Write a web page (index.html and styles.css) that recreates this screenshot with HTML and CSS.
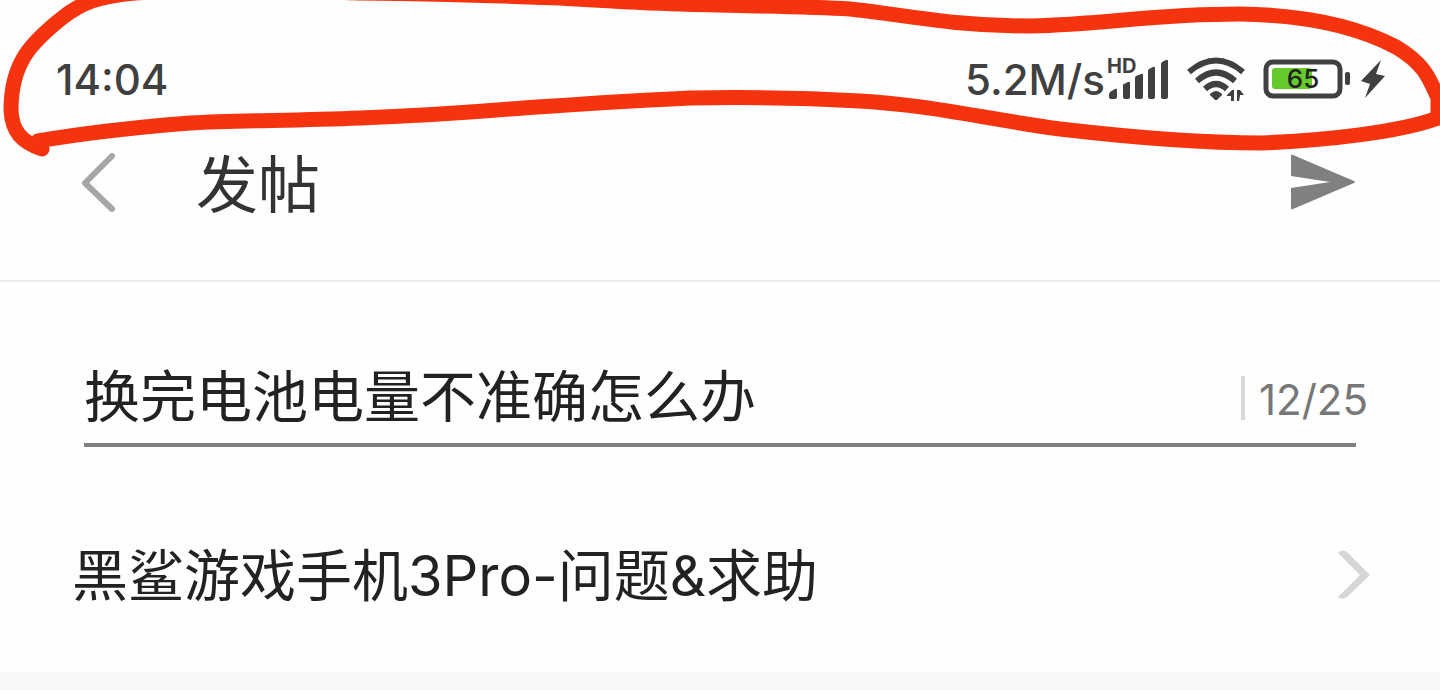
FILE: index.html
```
<!DOCTYPE html>
<html lang="zh-CN">
<head>
<meta charset="UTF-8">
<meta name="viewport" content="width=device-width, initial-scale=1.0">
<title>发帖</title>
<link rel="stylesheet" href="styles.css">
</head>
<body>

<div class="status-bar">
  <span class="time">14:04</span>
  <div class="status-icons">
    <span class="speed">5.2M/s</span>
    <div class="signal">
      <span class="hd">HD</span>
      <svg width="62" height="42" viewBox="0 0 62 42" fill="#404040">
        <path d="M3 34l5-3q2-1 2 1v7q0 2-2 2H4q-2 0-2-2v-3z"/>
        <path d="M16 27q0-1 1-1l4-2q2-1 2 1v14q0 2-2 2h-3q-2 0-2-2z"/>
        <path d="M28 20q0-1 1-2l5-2q2-1 2 1v22q0 2-2 2h-4q-2 0-2-2z"/>
        <path d="M41 13q0-1 1-2l4-2q2-1 2 1v29q0 2-2 2h-3q-2 0-2-2z"/>
        <path d="M54 6q0-1 1-2l4-2q2-1 2 1v36q0 2-2 2h-3q-2 0-2-2z"/>
      </svg>
    </div>
    <svg class="wifi" width="58" height="44" viewBox="0 0 58 44" fill="none" stroke="#404040" stroke-width="6">
      <path d="M2 15Q29-8 56 15"/>
      <path d="M10 24Q29 7 48 24"/>
      <path d="M18 32Q29 22 40 32"/>
      <path d="M23 37q6-6 12 0v1l-5 5h-2l-5-5z" fill="#404040" stroke="none"/>
      <path d="M40 38l5-5h2v11h-3v-5h-4zM50 33h3l4 5h-4v1l-1 5h-2z" fill="#404040" stroke="none"/>
    </svg>
    <div class="battery">
      <svg width="88" height="40" viewBox="0 0 88 40">
        <rect x="3" y="3" width="74" height="34" rx="7" fill="none" stroke="#404040" stroke-width="5"/>
        <rect x="9" y="9" width="40" height="21" rx="3" fill="#65cb2c"/>
        <rect x="82" y="13" width="5" height="13" rx="2" fill="#404040"/>
      </svg>
      <span class="battery-level">65</span>
    </div>
    <svg class="bolt" width="24" height="38" viewBox="0 0 24 38" fill="#404040">
      <path d="M20 0L0 21l9 3L4 38l20-22-9-2z"/>
    </svg>
  </div>
</div>

<header class="header">
  <button type="button" class="icon-btn" aria-label="返回">
    <svg width="36" height="60" viewBox="0 0 36 60" fill="none" stroke="#a6a6a6" stroke-width="6" stroke-linecap="round" stroke-linejoin="round">
      <path d="M32 3L5 30l27 26"/>
    </svg>
  </button>
  <h1>发帖</h1>
  <button type="button" class="icon-btn" aria-label="发送">
    <svg width="66" height="58" viewBox="0 0 66 58" fill="#808080">
      <path d="M1 2q0-2 2-1l61 26q2 1 0 2L3 55q-2 1-2-1V34l39-6L1 22z"/>
    </svg>
  </button>
</header>

<main>
  <form class="post-title">
    <input type="text" id="title" aria-label="标题" maxlength="25" value="换完电池电量不准确怎么办">
    <output class="counter" for="title">12/25</output>
  </form>

  <a href="#" class="forum">
    <span>黑鲨游戏手机3Pro-问题&amp;求助</span>
    <svg width="32" height="50" viewBox="0 0 32 50" fill="#d6d6d6">
      <path d="M0 3Q5-2 10 3l22 22-22 21q-5 5-10 1l22-22z"/>
    </svg>
  </a>
</main>

<svg class="marker" viewBox="0 0 1440 160" fill="none" stroke="#f5330f" stroke-width="15" stroke-linecap="round" stroke-linejoin="round" aria-hidden="true">
  <path d="M42 149C22 142 12 132 11 110C11 62 32 42 62 18C82 2 100-4 135-7C220-12 300-9 360-7C440-6 510-4 560-2C610 1 640 3 680 4C740 6 800 6 850 9C900 14 950 26 1030 26C1110 24 1150 14 1240 14C1310 15 1360 28 1396 47C1425 64 1430 80 1438 98V118C1400 132 1330 140 1262 143C1190 143 1120 136 1060 129C980 118 930 105 860 101C790 97 740 97 690 98C620 101 570 105 510 109C450 114 410 116 360 118C290 121 240 120 190 123C140 127 90 132 38 141"/>
</svg>

</body>
</html>
```

FILE: styles.css
```
* {
  box-sizing: border-box;
}

body {
  font-family: Inter, "Noto Sans CJK SC", sans-serif;
  background-color: #fefefe;
  color: #222;
  margin: 0;
  min-height: 100vh;
  display: flex;
  flex-direction: column;
}

.status-bar {
  display: flex;
  justify-content: space-between;
  align-items: center;
  height: 110px;
  padding: 48px 55px 0 56px;
  color: #404040;
  font-size: 42px;
  font-weight: 500;
}

.status-icons {
  display: flex;
  align-items: center;
  gap: 18px;
}

.signal {
  position: relative;
  display: flex;
  margin-left: -16px;
}

.hd {
  position: absolute;
  top: -2px;
  left: 0;
  font-size: 20px;
  line-height: 20px;
  font-weight: 700;
}

.battery {
  position: relative;
  display: flex;
}

.battery-level {
  position: absolute;
  top: 0;
  left: 0;
  width: 80px;
  font-size: 26px;
  line-height: 40px;
  text-align: center;
  color: #222;
}

.bolt {
  margin-left: -8px;
}

.header {
  display: flex;
  align-items: center;
  height: 172px;
  padding: 0 84px 24px 80px;
  border-bottom: 2px solid #ebebeb;
}

.header h1 {
  flex: 1;
  margin: 0 0 0 80px;
  padding-top: 6px;
  color: #333;
  font-size: 62px;
  line-height: 72px;
  font-weight: 400;
}

.icon-btn {
  display: flex;
  padding: 0;
  border: none;
  background: none;
  cursor: pointer;
}

main {
  flex: 1;
  padding-top: 72px;
  border-bottom: 18px solid #f8f8f8;
}

.post-title {
  position: relative;
  margin: 0 84px;
}

.post-title input {
  display: block;
  width: 100%;
  height: 93px;
  padding: 0 140px 12px 0;
  border: none;
  border-bottom: 4px solid #808080;
  outline: none;
  background: none;
  color: #222;
  font-family: inherit;
  font-size: 56px;
}

.counter {
  position: absolute;
  top: 22px;
  right: -12px;
  height: 44px;
  padding-left: 14px;
  border-left: 4px solid #d9d9d9;
  color: #777;
  font-size: 42px;
  line-height: 48px;
}

.forum {
  display: flex;
  justify-content: space-between;
  align-items: center;
  margin-top: 87px;
  padding: 0 70px 0 72px;
  color: #222;
  font-size: 56px;
  line-height: 80px;
  text-decoration: none;
}

.forum span {
  padding-top: 2px;
}

.marker {
  position: absolute;
  top: 0;
  left: 0;
  width: 100%;
  pointer-events: none;
}
```
